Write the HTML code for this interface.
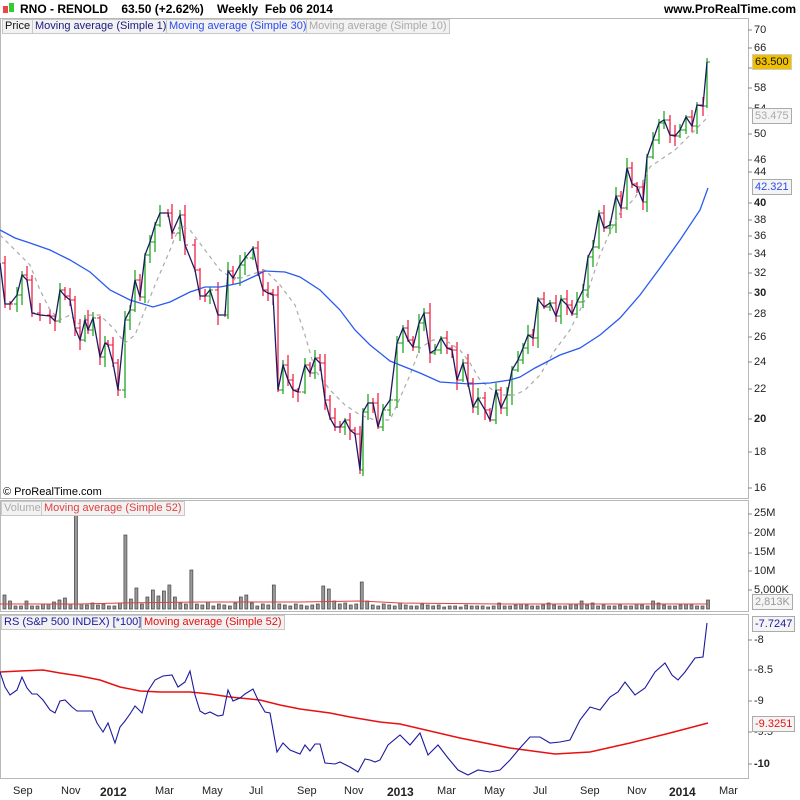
<!DOCTYPE html>
<html><head><meta charset="utf-8"><style>
body{margin:0;width:800px;height:800px;background:#fff;font-family:"Liberation Sans",sans-serif;overflow:hidden;position:relative}
.t{position:absolute;white-space:nowrap}
.lg{position:absolute;font-size:11px;border:1px solid #c8c8c8;background:#f2f2f2;padding:0 2px;line-height:13px}
.ax{position:absolute;font-size:11px;color:#222;left:754px}
.bx{position:absolute;font-size:11px;border:1px solid #aaa;background:#eee;padding:0 2px;line-height:14px}
.xl{position:absolute;top:785px;font-size:11px;color:#222}
</style></head><body>
<svg width="800" height="800" style="position:absolute;left:0;top:0" id="s">
<rect x="0.5" y="18.5" width="748" height="480" fill="none" stroke="#b8b8b8"/>
<rect x="0.5" y="500.5" width="748" height="111" fill="none" stroke="#b8b8b8"/>
<rect x="0.5" y="614.5" width="748" height="164" fill="none" stroke="#b8b8b8"/>
<g id="ticks" stroke="#888"></g>
<g id="bars"></g>
<g id="vol"></g>
<polyline id="ma10" fill="none" stroke="#aaa" stroke-width="1.2" stroke-dasharray="4,4"/>
<polyline id="ma30" fill="none" stroke="#2a5af0" stroke-width="1.3"/>
<polyline id="px" fill="none" stroke="#1a1a60" stroke-width="1.3"/>
<polyline id="vma" fill="none" stroke="#e04040" stroke-width="1"/>
<polyline id="rsma" fill="none" stroke="#e81010" stroke-width="1.5"/>
<polyline id="rs" fill="none" stroke="#1a1aa0" stroke-width="1.1"/>
<g><rect x="3" y="6" width="5" height="7" fill="#e44"/><rect x="9" y="3" width="5" height="9" fill="#3c3"/></g>
</svg>
<div class="t" style="left:20px;top:2px;font-size:12px;font-weight:bold">RNO - RENOLD&nbsp;&nbsp;&nbsp;&nbsp;63.50 (+2.62%)&nbsp;&nbsp;&nbsp;&nbsp;Weekly&nbsp;&nbsp;Feb 06 2014</div>
<div class="t" style="right:4px;top:2px;font-size:12px;font-weight:bold">www.ProRealTime.com</div>
<div class="lg" style="left:2px;top:19px;color:#111">Price</div>
<div class="lg" style="left:32px;top:19px;color:#1a1a80">Moving average (Simple 1)</div>
<div class="lg" style="left:166px;top:19px;color:#2a4af0">Moving average (Simple 30)</div>
<div class="lg" style="left:306px;top:19px;color:#aaa">Moving average (Simple 10)</div>
<div class="t" style="left:3px;top:486px;font-size:11px">© ProRealTime.com</div>
<div class="lg" style="left:1px;top:501px;color:#aaa">Volume</div>
<div class="lg" style="left:41px;top:501px;color:#e04040">Moving average (Simple 52)</div>
<div class="lg" style="left:1px;top:615px;color:#1a1aa0">RS (S&amp;P 500 INDEX) [*100]</div>
<div class="lg" style="left:141px;top:615px;color:#e81010">Moving average (Simple 52)</div>
<div class="ax" style="top:24px">70</div><div class="ax" style="top:42px">66</div><div class="ax" style="top:82px">58</div>
<div class="ax" style="top:128px">50</div><div class="ax" style="top:154px">46</div><div class="ax" style="top:166px">44</div>
<div class="ax" style="top:197px;font-weight:bold">40</div><div class="ax" style="top:214px">38</div><div class="ax" style="top:230px">36</div>
<div class="ax" style="top:248px">34</div><div class="ax" style="top:267px">32</div><div class="ax" style="top:287px;font-weight:bold">30</div>
<div class="ax" style="top:308px">28</div><div class="ax" style="top:331px">26</div><div class="ax" style="top:356px">24</div>
<div class="ax" style="top:383px">22</div><div class="ax" style="top:413px;font-weight:bold">20</div><div class="ax" style="top:446px">18</div>
<div class="ax" style="top:482px">16</div>
<div class="ax" style="top:103px">54</div>
<div class="bx" style="left:752px;top:54px;background:#f0c000;border-color:#ccc;color:#111">63.500</div>
<div class="bx" style="left:752px;top:108px;color:#aaa;background:#f4f4f4">53.475</div>
<div class="bx" style="left:752px;top:179px;color:#2a4af0;background:#f4f4f4">42.321</div>
<div class="ax" style="top:507px">25M</div><div class="ax" style="top:527px">20M</div><div class="ax" style="top:546px">15M</div>
<div class="ax" style="top:565px">10M</div><div class="ax" style="top:584px">5,000K</div>
<div class="bx" style="left:752px;top:594px;color:#999;background:#f4f4f4">2,813K</div>
<div class="bx" style="left:752px;top:616px;color:#1a1aa0;background:#f4f4f4">-7.7247</div>
<div class="ax" style="top:634px">-8</div><div class="ax" style="top:664px">-8.5</div><div class="ax" style="top:695px">-9</div>
<div class="ax" style="top:726px">-9.5</div><div class="ax" style="top:758px;font-weight:bold">-10</div>
<div class="bx" style="left:752px;top:716px;color:#e81010;background:#f4f4f4">-9.3251</div>
<div class="xl" style="left:13px">Sep</div><div class="xl" style="left:61px">Nov</div><div class="xl" style="left:100px;font-weight:bold;font-size:12px">2012</div>
<div class="xl" style="left:155px">Mar</div><div class="xl" style="left:202px">May</div><div class="xl" style="left:249px">Jul</div>
<div class="xl" style="left:297px">Sep</div><div class="xl" style="left:344px">Nov</div><div class="xl" style="left:387px;font-weight:bold;font-size:12px">2013</div>
<div class="xl" style="left:437px">Mar</div><div class="xl" style="left:484px">May</div><div class="xl" style="left:533px">Jul</div>
<div class="xl" style="left:580px">Sep</div><div class="xl" style="left:627px">Nov</div><div class="xl" style="left:669px;font-weight:bold;font-size:12px">2014</div>
<div class="xl" style="left:719px">Mar</div>
<script>
(function(){
var P=[0,263,5,304,10,304,17,295,22,275,27,280,32,313,40,315,50,316,55,321,60,290,65,296,70,300,75,328,80,340,85,320,88,330,93,318,100,357,105,343,108,345,113,363,118,390,125,320,130,310,135,280,140,297,145,255,150,242,155,225,160,213,168,213,172,233,180,215,185,245,195,270,200,296,205,296,210,290,218,315,225,315,228,271,233,278,240,265,245,258,253,248,258,272,263,290,268,293,273,295,278,390,283,365,288,380,293,390,298,392,305,365,310,373,315,358,320,363,325,400,330,418,335,427,340,427,345,420,350,430,355,434,360,470,363,412,368,403,373,403,378,427,383,410,390,400,397,343,403,328,408,340,413,347,419,323,424,313,430,353,435,350,441,338,447,348,452,350,457,380,463,363,468,383,473,407,478,398,485,410,490,420,496,390,501,408,507,395,512,370,518,360,523,348,528,335,533,338,538,299,544,307,550,303,556,316,561,299,567,305,572,314,577,302,583,290,588,257,593,247,599,213,604,228,610,225,616,196,621,208,627,168,632,184,637,187,643,202,647,157,653,140,659,123,664,120,670,135,675,136,680,130,686,117,692,126,697,105,703,106,707,62];
var M30=[0,230,15,238,30,243,50,250,70,260,90,272,110,290,130,300,153,307,170,302,190,292,205,287,220,287,240,283,255,276,265,271,285,272,300,277,320,290,340,310,355,330,370,345,390,361,420,373,440,382,470,384,490,383,510,380,520,377,535,368,560,355,580,348,600,335,620,318,640,295,660,268,680,240,700,210,708,188];
var M10=[0,235,15,250,30,265,40,290,50,310,60,320,70,315,80,325,90,315,100,315,115,330,125,343,135,335,145,310,155,285,170,250,180,225,190,230,205,250,220,270,235,280,250,275,265,270,280,285,295,305,305,335,315,370,330,390,345,405,360,415,375,420,390,420,400,398,410,375,420,348,433,340,445,340,460,350,470,363,480,380,490,388,500,395,515,395,525,390,540,375,555,350,570,330,585,300,600,255,610,232,620,213,635,198,650,167,660,160,675,150,690,135,705,120,708,115];
var RS=[0,672,5,687,10,695,17,690,22,677,27,688,32,694,37,694,43,700,50,710,55,713,60,701,65,700,72,707,77,711,92,711,97,723,103,732,108,723,115,743,120,727,125,721,130,714,135,706,142,713,148,691,155,680,163,676,172,675,178,687,185,682,190,671,195,695,200,711,205,714,210,712,218,716,223,715,228,690,233,701,240,698,245,694,253,689,258,700,265,712,270,713,277,752,283,743,290,750,300,754,305,745,310,751,315,744,320,744,325,763,335,764,340,762,350,767,358,772,365,759,370,760,375,762,380,760,388,745,400,735,410,745,420,733,428,755,438,745,448,758,458,770,468,775,478,770,490,772,500,770,510,760,520,748,530,737,540,737,550,743,560,742,570,740,580,720,590,707,600,710,610,697,618,692,625,682,635,695,645,688,655,672,665,663,672,675,678,680,685,672,695,658,703,657,707,623];
var RSM=[0,672,20,671,43,670,60,673,80,676,100,680,120,687,140,691,160,692,190,692,210,694,230,697,260,700,280,705,300,709,330,713,350,717,380,722,400,724,460,738,510,748,555,754,590,752,630,743,670,733,708,723];
function pl(a){var s=[];for(var i=0;i<a.length;i+=2)s.push(a[i]+','+a[i+1]);return s.join(' ');}
function g(id){return document.getElementById(id);}
g('px').setAttribute('points',pl(P));g('ma30').setAttribute('points',pl(M30));g('ma10').setAttribute('points',pl(M10));
g('rs').setAttribute('points',pl(RS));g('rsma').setAttribute('points',pl(RSM));
var h='';
for(var i=2;i<P.length;i+=2){var x=P[i],y=P[i+1],py=P[i-1],up=y<py,c=up?'#10a010':'#f0103a';
var hi=Math.min(y,py)-2-((i*7)%9),lo=Math.max(y,py)+2+((i*11)%10);
h+='<line x1="'+x+'" y1="'+hi+'" x2="'+x+'" y2="'+lo+'" stroke="'+c+'" stroke-width="1.2"/><line x1="'+x+'" y1="'+y+'" x2="'+(x+3)+'" y2="'+y+'" stroke="'+c+'"/><line x1="'+(x-3)+'" y1="'+py+'" x2="'+x+'" y2="'+py+'" stroke="'+c+'"/>';}
g('bars').innerHTML=h;
var V=[14,8,3,3,8,3,3,5,5,7,9,11,5,97,5,4,6,4,5,3,3,6,74,10,21,5,12,19,13,18,24,12,6,5,39,5,4,7,3,5,4,3,6,12,14,6,3,5,4,24,5,4,3,5,4,3,4,5,23,20,8,5,6,4,5,27,8,4,3,5,4,3,6,4,3,3,5,4,3,4,2,3,3,2,4,3,3,3,2,3,6,3,3,4,5,4,3,3,4,6,4,3,3,5,4,8,4,6,3,4,3,3,4,3,3,5,4,3,8,6,4,3,3,4,5,4,3,3,9];
var vh='';var n=V.length;for(var j=0;j<n;j++){var xx=4.5+j*(703.5/(n-1));var tp=609-V[j];if(tp<502)tp=502;
vh+='<rect x="'+(xx-1.5)+'" y="'+tp+'" width="3" height="'+(609-tp)+'" fill="#999" stroke="#444" stroke-width="0.7"/>';}
g('vol').innerHTML=vh;
g('vma').setAttribute('points','0,604 80,604 120,603 200,602 300,602 360,601 400,603 500,604 600,604 708,604');
var t='';[30,48,68,88,108,134,160,172,203,220,236,254,273,293,314,337,362,389,419,452,488,514,533,553,571,590,640,670,701,732,764].forEach(function(y){t+='<line x1="748" y1="'+y+'" x2="752" y2="'+y+'"/>';});
g('ticks').innerHTML=t;
})();
</script>
</body></html>
